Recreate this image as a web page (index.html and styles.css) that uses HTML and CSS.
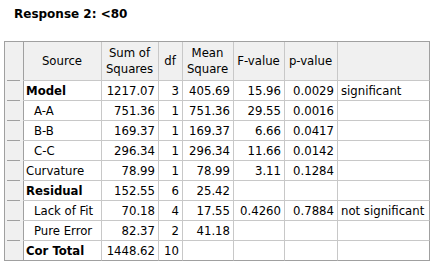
FILE: index.html
```html
<!DOCTYPE html>
<html lang="en">
<head>
    <meta charset="UTF-8">
    <title>ANOVA - Response 2</title>
    <link rel="stylesheet" href="styles.css">
</head>
<body>
    <h2 class="title">Response 2: &lt;80</h2>
    <table class="anova">
        <thead>
            <tr>
                <th class="rowhead w-head"></th>
                <th class="w-source">Source</th>
                <th class="w-sum">Sum of<br>Squares</th>
                <th class="w-df">df</th>
                <th class="w-mean">Mean<br>Square</th>
                <th class="w-f">F-value</th>
                <th class="w-p">p-value</th>
                <th class="w-note last"></th>
            </tr>
        </thead>
        <tbody>
            <tr>
                <td class="rowhead"></td>
                <td class="src bold">Model</td>
                <td>1217.07</td><td>3</td><td>405.69</td><td>15.96</td><td>0.0029</td>
                <td class="note last">significant</td>
            </tr>
            <tr>
                <td class="rowhead"></td>
                <td class="src sub">A-A</td>
                <td>751.36</td><td>1</td><td>751.36</td><td>29.55</td><td>0.0016</td>
                <td class="note last"></td>
            </tr>
            <tr>
                <td class="rowhead"></td>
                <td class="src sub">B-B</td>
                <td>169.37</td><td>1</td><td>169.37</td><td>6.66</td><td>0.0417</td>
                <td class="note last"></td>
            </tr>
            <tr>
                <td class="rowhead"></td>
                <td class="src sub">C-C</td>
                <td>296.34</td><td>1</td><td>296.34</td><td>11.66</td><td>0.0142</td>
                <td class="note last"></td>
            </tr>
            <tr>
                <td class="rowhead"></td>
                <td class="src">Curvature</td>
                <td>78.99</td><td>1</td><td>78.99</td><td>3.11</td><td>0.1284</td>
                <td class="note last"></td>
            </tr>
            <tr>
                <td class="rowhead"></td>
                <td class="src bold">Residual</td>
                <td>152.55</td><td>6</td><td>25.42</td><td></td><td></td>
                <td class="note last"></td>
            </tr>
            <tr>
                <td class="rowhead"></td>
                <td class="src sub">Lack of Fit</td>
                <td>70.18</td><td>4</td><td>17.55</td><td>0.4260</td><td>0.7884</td>
                <td class="note last">not significant</td>
            </tr>
            <tr>
                <td class="rowhead"></td>
                <td class="src sub">Pure Error</td>
                <td>82.37</td><td>2</td><td>41.18</td><td></td><td></td>
                <td class="note last"></td>
            </tr>
            <tr class="final">
                <td class="rowhead"></td>
                <td class="src bold">Cor Total</td>
                <td>1448.62</td><td>10</td><td></td><td></td><td></td>
                <td class="note last"></td>
            </tr>
        </tbody>
    </table>
</body>
</html>
```

FILE: styles.css
```css
body {
    margin: 0;
    padding: 0 4px;
    background: #fff;
    color: #000;
    font-family: "DejaVu Sans Condensed", "DejaVu Sans", sans-serif;
    font-size: 13px;
}

.title {
    margin: 0;
    padding: 6px 0 0 10px;
    height: 41px;
    box-sizing: border-box;
    font-family: "DejaVu Sans", sans-serif;
    font-size: 12px;
    font-weight: bold;
    line-height: 16px;
}

.anova {
    border-collapse: separate;
    border-spacing: 0;
    table-layout: fixed;
    border-left: 1px solid #a0a0a0;
    border-top: 1px solid #a0a0a0;
}

.anova th,
.anova td {
    box-sizing: border-box;
    padding: 0 3px 0 2px;
    border-right: 1px solid #c8c8c8;
    border-bottom: 1px solid #c8c8c8;
    white-space: nowrap;
    overflow: hidden;
}

.anova th {
    height: 39px;
    background: #f0f0f0;
    font-weight: normal;
    text-align: center;
    line-height: 16px;
}

.anova td {
    height: 20px;
    line-height: 16px;
    text-align: right;
}

/* grey row header strip with short separators */
.anova .rowhead {
    background-color: #f0f0f0;
    background-image: linear-gradient(#a0a0a0, #a0a0a0);
    background-repeat: no-repeat;
    background-origin: border-box;
    background-size: 13px 1px;
    background-position: 2px 100%;
    border-right-color: #a0a0a0;
    border-bottom-color: transparent;
}

.anova .src {
    text-align: left;
}

.anova .sub {
    padding-left: 10px;
}

.anova .bold {
    font-weight: bold;
}

.anova .note {
    text-align: left;
    padding-left: 3px;
}

.anova .last {
    border-right-color: #a0a0a0;
}

.anova .final td {
    border-bottom-color: #a0a0a0;
}

.w-head { width: 19px; }
.w-source { width: 78px; }
.w-sum { width: 57px; }
.w-df { width: 24px; }
.w-mean { width: 51px; }
.w-f { width: 51px; }
.w-p { width: 53px; }
.w-note { width: 92px; }
```
